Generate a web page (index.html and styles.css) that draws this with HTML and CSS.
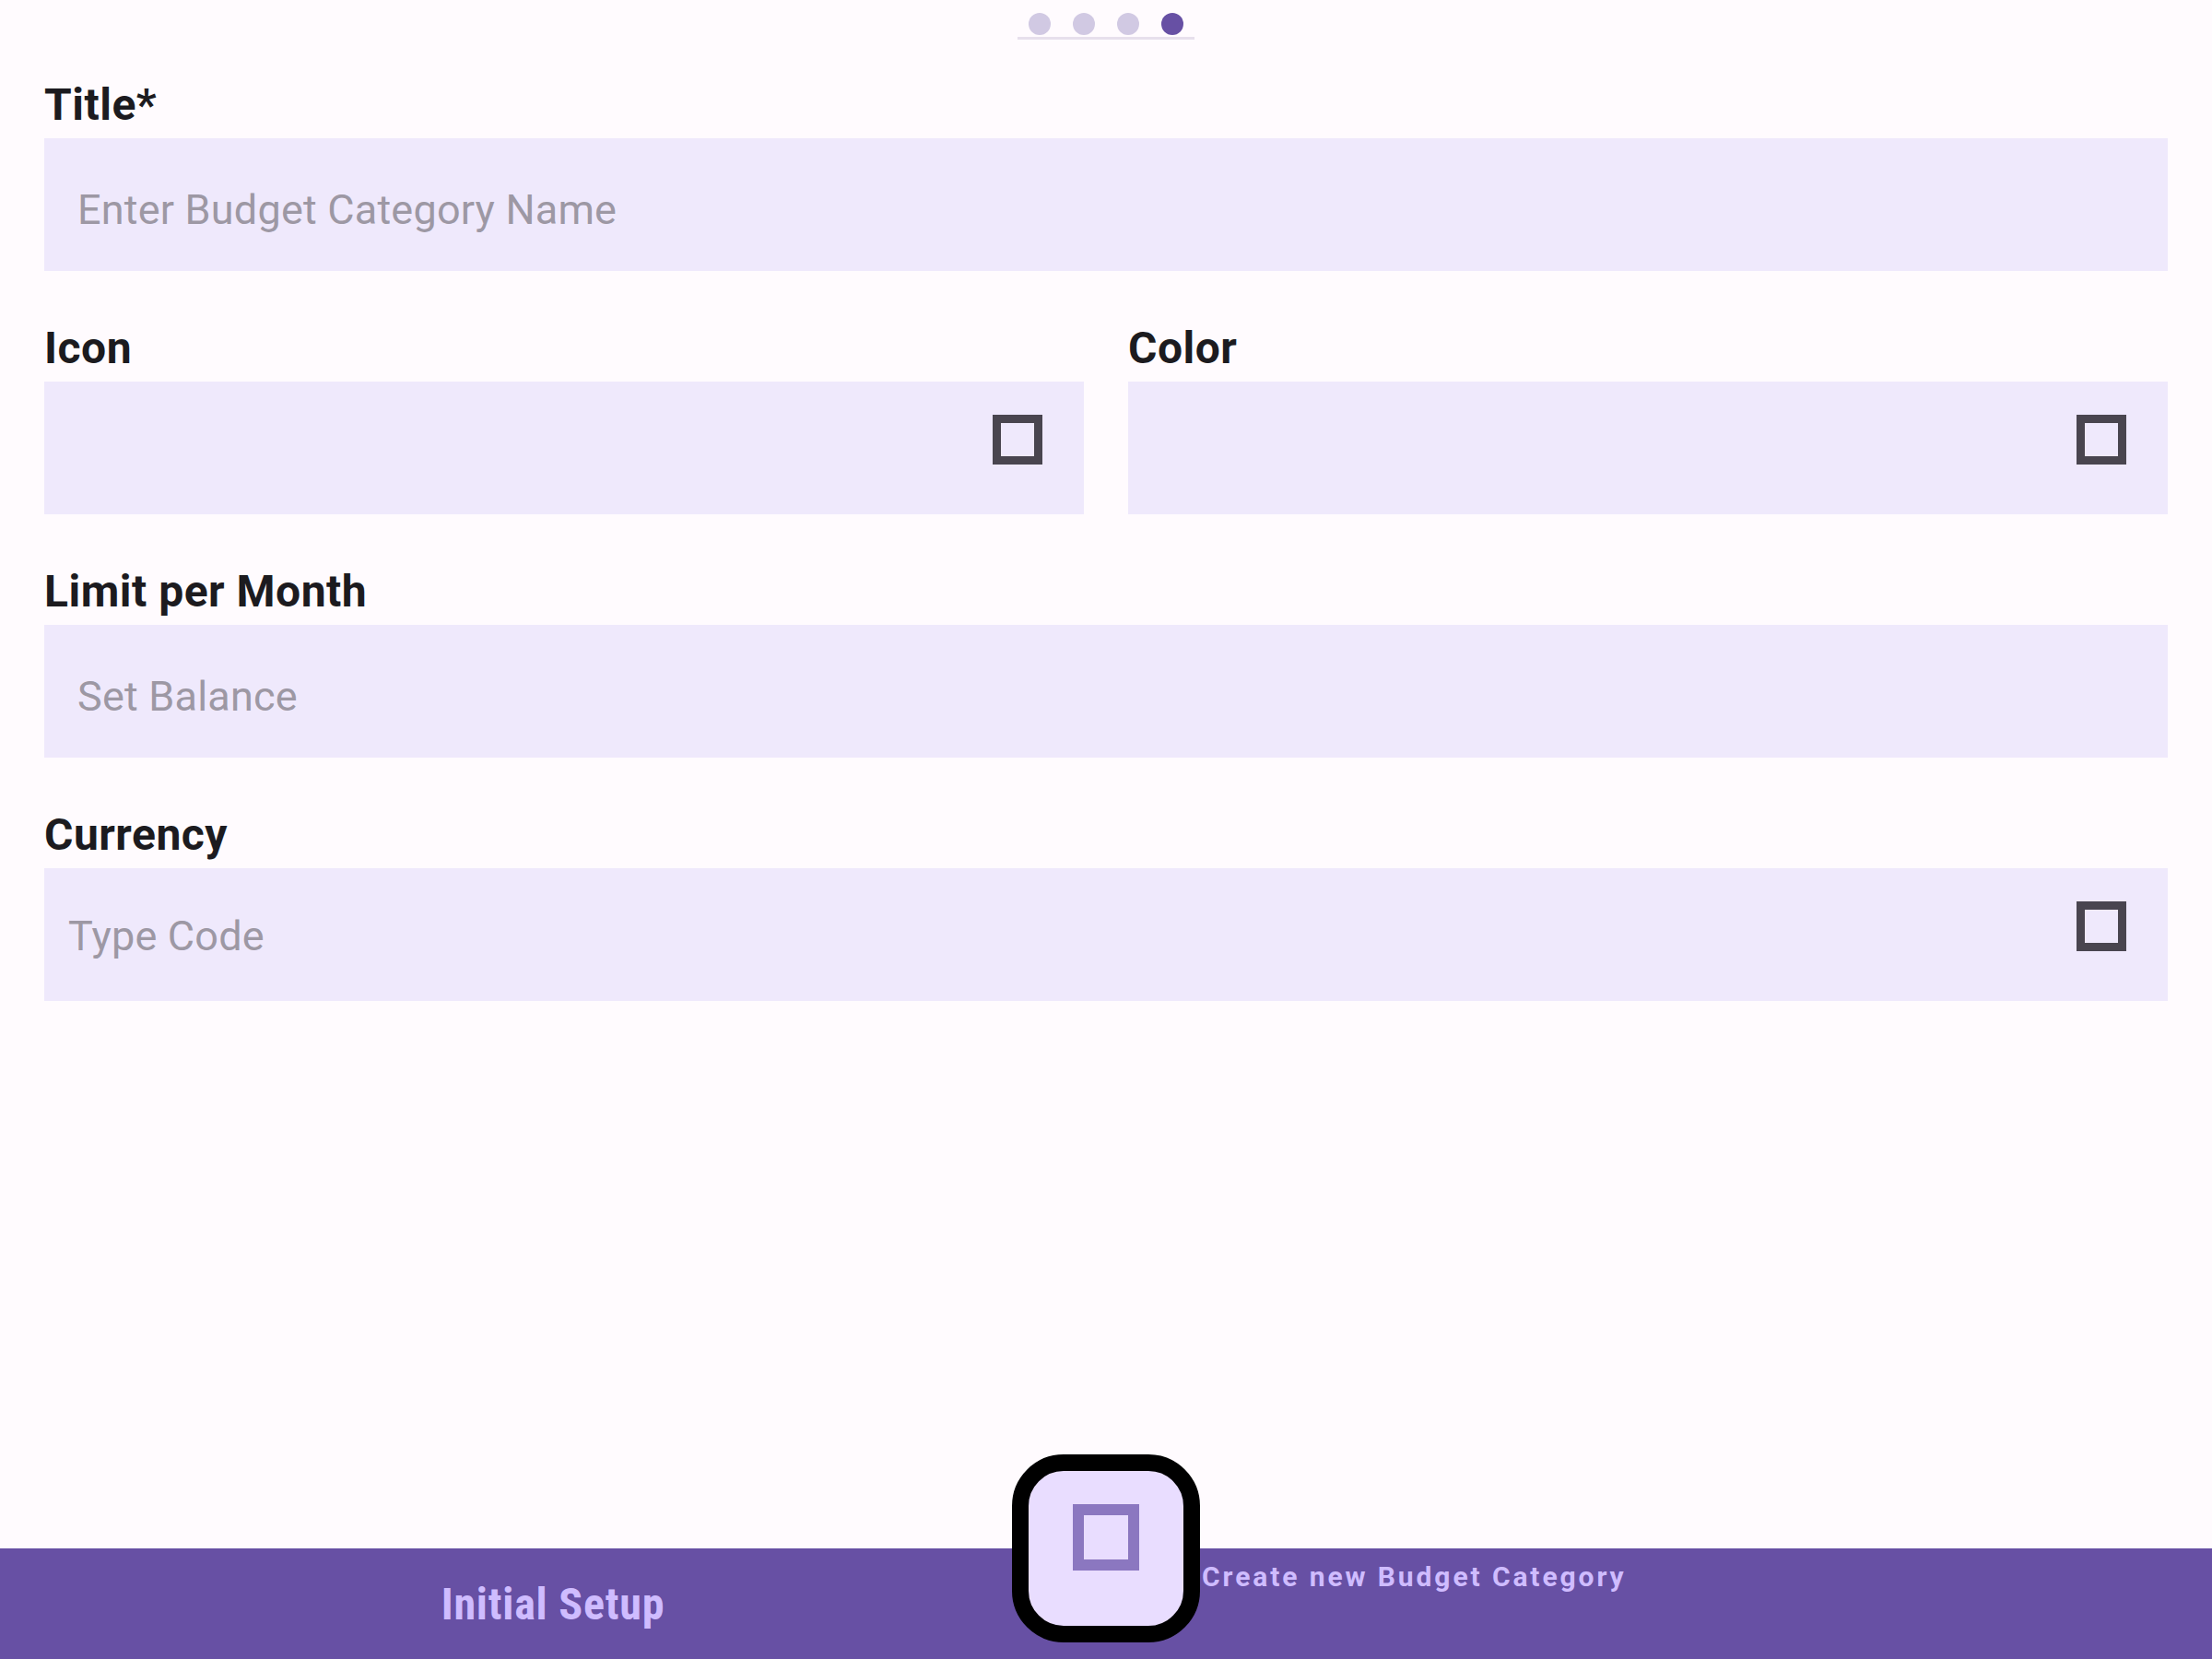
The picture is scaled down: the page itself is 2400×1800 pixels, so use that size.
FILE: index.html
```html
<!DOCTYPE html>
<html lang="en">
<head>
<meta charset="utf-8">
<title>Create new Budget Category</title>
<link rel="stylesheet" href="styles.css">
</head>
<body>
<div class="screen">
  <header class="pager">
    <div class="dots">
      <span class="dot"></span>
      <span class="dot"></span>
      <span class="dot"></span>
      <span class="dot active"></span>
    </div>
  </header>

  <main class="form">
    <section class="field">
      <label class="label">Title*</label>
      <div class="input"><span class="placeholder">Enter Budget Category Name</span></div>
    </section>

    <div class="row">
      <section class="field">
        <label class="label">Icon</label>
        <div class="input picker"><span class="tofu"></span></div>
      </section>
      <section class="field">
        <label class="label">Color</label>
        <div class="input picker"><span class="tofu"></span></div>
      </section>
    </div>

    <section class="field">
      <label class="label">Limit per Month</label>
      <div class="input"><span class="placeholder">Set Balance</span></div>
    </section>

    <section class="field">
      <label class="label">Currency</label>
      <div class="input currency"><span class="placeholder">Type Code</span><span class="tofu"></span></div>
    </section>
  </main>

  <footer class="bottom-bar">
    <div class="bar-left"><span class="bar-title">Initial Setup</span></div>
    <div class="bar-right"><span class="bar-caption">Create new Budget Category</span></div>
    <button class="fab" type="button"><span class="fab-icon"></span></button>
  </footer>
</div>
</body>
</html>
```
FILE: styles.css
```css
* { box-sizing: border-box; }

html, body {
  margin: 0;
  padding: 0;
  background: #fffbfe;
}

body {
  font-family: Roboto, "Noto Sans", sans-serif;
  color: #1c1b1f;
}

.screen {
  position: relative;
  display: flex;
  flex-direction: column;
  width: 2400px;
  height: 1800px;
  overflow: hidden;
}

/* pager dots */
.pager {
  display: flex;
  justify-content: center;
  padding-top: 14px;
}

.dots {
  display: flex;
  width: 192px;
  padding-bottom: 2px;
  border-bottom: 3px solid #e7e0ec;
}

.dot {
  display: block;
  width: 24px;
  height: 24px;
  margin: 0 12px;
  border-radius: 50%;
  background: #d1c9e3;
}

.dot.active { background: #6750a4; }

/* form */
.form {
  flex: 1;
  display: flex;
  flex-direction: column;
  gap: 56px;
  padding: 43px 48px 0;
}

.row {
  display: grid;
  grid-template-columns: 1fr 1fr;
  gap: 48px;
}

.field {
  display: flex;
  flex-direction: column;
  gap: 8px;
}

.label {
  display: block;
  height: 56px;
  font-size: 48px;
  line-height: 56px;
  font-weight: 700;
  letter-spacing: 0.5px;
  color: #1c1b1f;
}

.input {
  display: flex;
  align-items: center;
  height: 144px;
  padding: 10px 45px 0 36px;
  background: #efe9fc;
}

.placeholder {
  font-size: 45px;
  line-height: 53px;
  letter-spacing: 0.2px;
  color: #9d98a4;
  white-space: nowrap;
}

.picker {
  justify-content: flex-end;
  padding-top: 0;
}

.currency {
  justify-content: space-between;
  padding: 0 45px 0 26px;
}

.currency .placeholder { margin-top: 3px; }

.tofu {
  display: block;
  flex: none;
  width: 54px;
  height: 54px;
  margin-bottom: 18px;
  border: 9px solid #49454f;
}

/* bottom bar */
.bottom-bar {
  position: relative;
  display: grid;
  grid-template-columns: 1fr 1fr;
  height: 120px;
  background: #6750a4;
  color: #cfbcff;
}

.bar-left {
  display: flex;
  align-items: center;
  justify-content: center;
}

.bar-title {
  font-size: 48px;
  font-weight: 700;
  font-stretch: 78%;
  letter-spacing: 0.8px;
}

.bar-right {
  padding: 13px 0 0 104px;
}

.bar-caption {
  font-size: 30px;
  line-height: 36px;
  font-weight: 700;
  letter-spacing: 2.9px;
  white-space: nowrap;
}

.fab {
  position: absolute;
  left: 1098px;
  top: -102px;
  display: flex;
  justify-content: center;
  align-items: flex-start;
  width: 204px;
  height: 204px;
  padding: 36px 0 0;
  border: 18px solid #000;
  border-radius: 56px;
  background: #e9ddff;
}

.fab-icon {
  display: block;
  width: 72px;
  height: 72px;
  border: 12px solid #8b77c0;
}
```
